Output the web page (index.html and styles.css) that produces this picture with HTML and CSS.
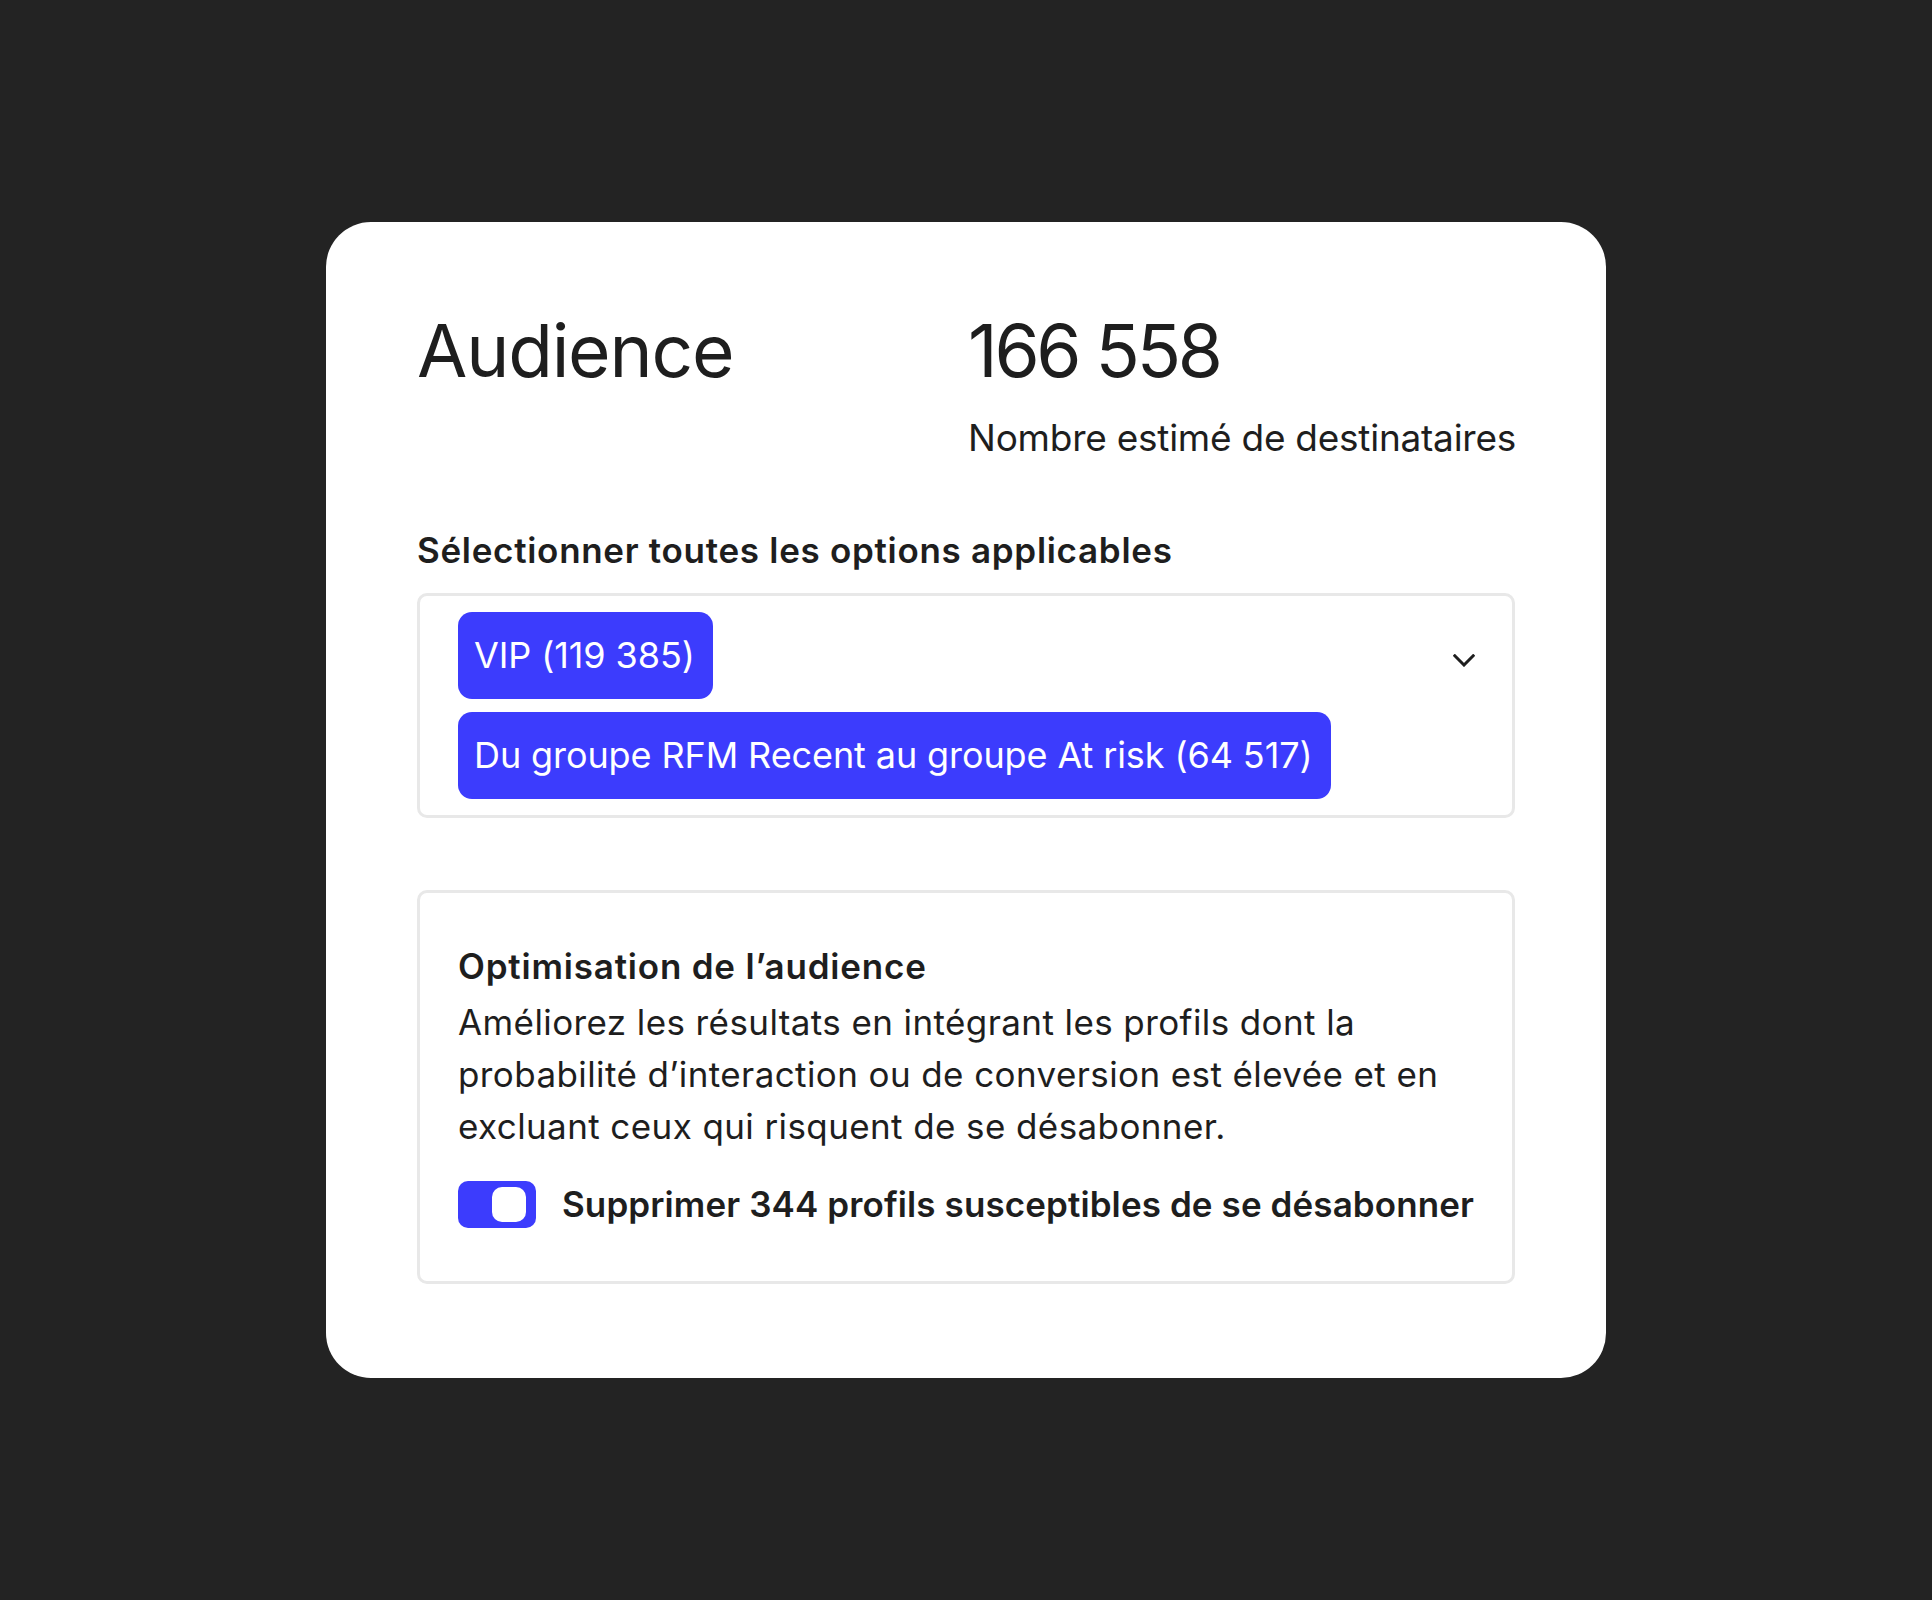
FILE: index.html
```html
<!DOCTYPE html>
<html lang="fr">
<head>
<meta charset="utf-8">
<title>Audience</title>
<link rel="stylesheet" href="styles.css">
</head>
<body>
<main class="card">
  <section class="top">
    <h1 class="title">Audience</h1>
    <div class="count">
      <div class="count-value">166 558</div>
      <div class="count-label">Nombre estimé de destinataires</div>
    </div>
  </section>

  <h2 class="field-label">Sélectionner toutes les options applicables</h2>
  <div class="select">
    <div class="chips">
      <span class="chip">VIP (119 385)</span>
      <span class="chip">Du groupe RFM Recent au groupe At risk (64 517)</span>
    </div>
    <svg class="chevron" width="22" height="13" viewBox="0 0 22 13" aria-hidden="true">
      <polyline points="1.8,1.8 11,11 20.2,1.8" fill="none" stroke="#1e1e1e" stroke-width="3" stroke-linecap="square"/>
    </svg>
  </div>

  <section class="optim">
    <h3 class="optim-title">Optimisation de l’audience</h3>
    <p class="optim-text">Améliorez les résultats en intégrant les profils dont la probabilité d’interaction ou de conversion est élevée et en excluant ceux qui risquent de se désabonner.</p>
    <div class="toggle-row">
      <span class="toggle"><span class="knob"></span></span>
      <span class="toggle-label">Supprimer 344 profils susceptibles de se désabonner</span>
    </div>
  </section>
</main>
</body>
</html>
```
FILE: styles.css
```css
html, body {
  margin: 0;
  padding: 0;
}

body {
  background: #232323;
  min-height: 100vh;
  display: flex;
  align-items: center;
  justify-content: center;
  font-family: Inter, "Liberation Sans", sans-serif;
  color: #1e1e1e;
}

.card {
  width: 1280px;
  box-sizing: border-box;
  background: #ffffff;
  border-radius: 45px;
  padding: 92px 91px 94px;
}

.top {
  display: grid;
  grid-template-columns: minmax(0, 1fr) minmax(0, 1fr);
}

.title {
  margin: 0;
  font-size: 73px;
  font-weight: 400;
  line-height: 1;
  letter-spacing: -1.2px;
}

.count {
  padding-left: 2px;
}

.count-value {
  font-size: 73px;
  line-height: 1;
  letter-spacing: -3.3px;
}

.count-label {
  margin-top: 29px;
  font-size: 37px;
  line-height: 1.2;
  letter-spacing: -0.25px;
  white-space: nowrap;
}

.field-label {
  margin: 68px 0 0;
  font-size: 35px;
  font-weight: 600;
  line-height: 1.2;
  letter-spacing: 0.7px;
}

.select {
  margin-top: 22px;
  border: 3px solid #e8e8e8;
  border-radius: 10px;
  padding: 16px 37px 16px 38px;
  display: flex;
  justify-content: space-between;
  align-items: flex-start;
}

.chips {
  display: flex;
  flex-direction: column;
  align-items: flex-start;
  gap: 13px;
}

.chip {
  background: #3c3cfd;
  color: #ffffff;
  border-radius: 14px;
  height: 87px;
  box-sizing: border-box;
  padding: 0 18px 0 16px;
  display: flex;
  align-items: center;
  font-size: 36px;
  letter-spacing: -0.1px;
}

.chevron {
  margin-top: 42px;
  flex: none;
}

.optim {
  margin-top: 72px;
  border: 3px solid #e8e8e8;
  border-radius: 10px;
  padding: 52px 38px 53px;
}

.optim-title {
  margin: 0;
  font-size: 35px;
  font-weight: 600;
  line-height: 1.2;
  letter-spacing: 0.8px;
}

.optim-text {
  margin: 9px 0 0;
  font-size: 35px;
  line-height: 52px;
  letter-spacing: 0.4px;
}

.toggle-row {
  margin-top: 29px;
  display: flex;
  align-items: center;
  gap: 26px;
}

.toggle {
  width: 78px;
  height: 47px;
  box-sizing: border-box;
  border-radius: 10px;
  background: #3c3cfd;
  display: flex;
  align-items: center;
  justify-content: flex-end;
  padding-right: 10px;
  flex: none;
}

.knob {
  width: 34px;
  height: 35px;
  border-radius: 10px;
  background: #ffffff;
}

.toggle-label {
  font-size: 35px;
  font-weight: 600;
  letter-spacing: 0.1px;
  white-space: nowrap;
}
```
